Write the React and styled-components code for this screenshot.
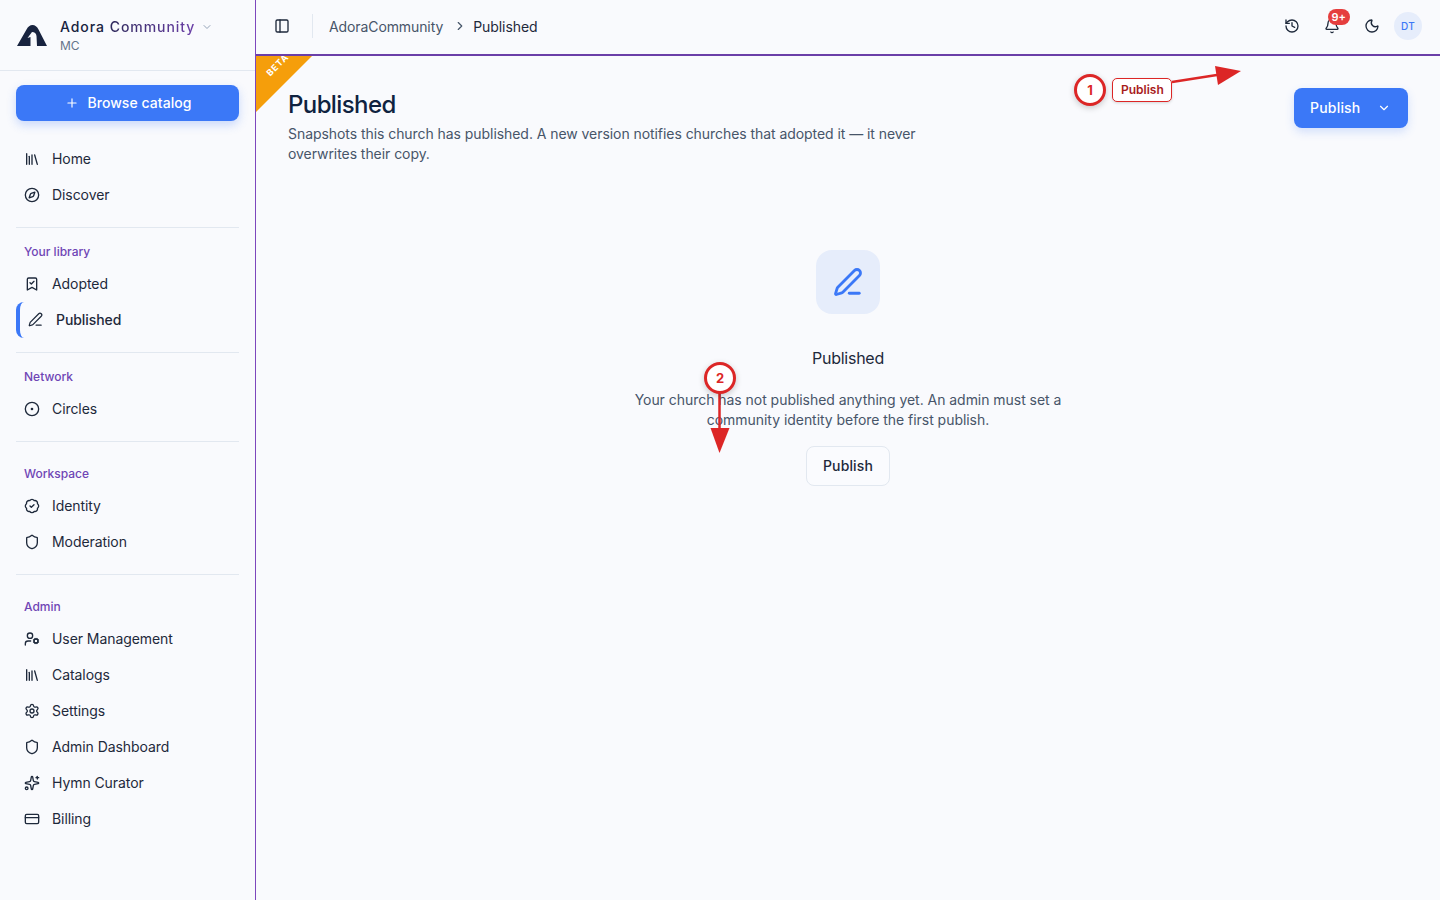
import React from 'react';
import styled, { createGlobalStyle } from 'styled-components';
import {
  BadgeCheck,
  Bell,
  BookmarkCheck,
  ChevronDown,
  ChevronRight,
  CircleDot,
  Compass,
  CreditCard,
  History,
  Library,
  Moon,
  PanelLeft,
  PenLine,
  Plus,
  Settings,
  Shield,
  Sparkles,
  UserCog,
} from 'lucide-react';

const sections = [
  { items: [{ icon: Library, label: 'Home' }, { icon: Compass, label: 'Discover' }] },
  {
    title: 'Your library',
    items: [{ icon: BookmarkCheck, label: 'Adopted' }, { icon: PenLine, label: 'Published', active: true }],
  },
  { title: 'Network', items: [{ icon: CircleDot, label: 'Circles' }] },
  {
    title: 'Workspace',
    roomy: true,
    items: [{ icon: BadgeCheck, label: 'Identity' }, { icon: Shield, label: 'Moderation' }],
  },
  {
    title: 'Admin',
    roomy: true,
    items: [
      { icon: UserCog, label: 'User Management' },
      { icon: Library, label: 'Catalogs' },
      { icon: Settings, label: 'Settings' },
      { icon: Shield, label: 'Admin Dashboard' },
      { icon: Sparkles, label: 'Hymn Curator' },
      { icon: CreditCard, label: 'Billing' },
    ],
  },
];

export default function App() {
  return (
    <>
      <GlobalStyle />
      <Shell>
        <Sidebar>
          <Brand>
            <svg width="32" height="24" viewBox="0 0 32 24">
              <path
                fill="#18233f"
                d="M1 23 L10.500 6.500 C12 3.500 14 2 16.500 2 C19 2 21 3.500 22.500 6.500 L31 23 L21 23 L20.500 13 C20.300 10.500 18.500 9 16 9 L11.500 15 L14.500 14 L14.500 23 Z"
              />
            </svg>
            <BrandText>
              <BrandRow>
                <BrandName>
                  Adora <span>Community</span>
                </BrandName>
                <ChevronDown size={12} color="#94a3b8" />
              </BrandRow>
              <BrandSub>MC</BrandSub>
            </BrandText>
          </Brand>
          <SidebarBody>
            <BrowseButton>
              <Plus size={14} strokeWidth={2} />
              Browse catalog
            </BrowseButton>
            {sections.map((section, i) => (
              <NavSection key={i} $roomy={section.roomy}>
                {section.title && <SectionTitle>{section.title}</SectionTitle>}
                {section.items.map((item) => (
                  <NavItem key={item.label} $active={item.active}>
                    <item.icon size={item.active ? 15 : 16} strokeWidth={2} />
                    {item.label}
                  </NavItem>
                ))}
              </NavSection>
            ))}
          </SidebarBody>
        </Sidebar>
        <Main>
          <TopBar>
            <IconButton>
              <PanelLeft size={16} />
            </IconButton>
            <BarDivider />
            <Crumb>AdoraCommunity</Crumb>
            <ChevronRight size={14} color="#475569" />
            <Crumb $current>Published</Crumb>
            <TopActions>
              <IconButton>
                <History size={16} />
              </IconButton>
              <IconButton>
                <Bell size={16} />
                <CountBadge>9+</CountBadge>
              </IconButton>
              <IconButton>
                <Moon size={16} />
              </IconButton>
              <Avatar>DT</Avatar>
            </TopActions>
          </TopBar>
          <Content>
            <BetaRibbon>
              <span>BETA</span>
            </BetaRibbon>
            <PageHead>
              <div>
                <PageTitle>Published</PageTitle>
                <PageText>
                  Snapshots this church has published. A new version notifies churches that adopted it — it never
                  overwrites their copy.
                </PageText>
              </div>
              <PublishMenu>
                Publish
                <ChevronDown size={14} strokeWidth={2} />
              </PublishMenu>
            </PageHead>
            <EmptyState>
              <EmptyIcon>
                <PenLine size={30} strokeWidth={2.25} />
              </EmptyIcon>
              <EmptyTitle>Published</EmptyTitle>
              <EmptyText>
                Your church has not published anything yet. An admin must set a community identity before the first
                publish.
              </EmptyText>
              <GhostButton>Publish</GhostButton>
            </EmptyState>
          </Content>
        </Main>
        <Marker $x={1074} $y={74}>1</Marker>
        <MarkerLabel>Publish</MarkerLabel>
        <ArrowLayer width="1440" height="900" viewBox="0 0 1440 900">
          <path d="M1172 82 L1220 74.5" stroke="#dc2626" strokeWidth="2.5" fill="none" />
          <path d="M1241 71 L1218 85 L1215 66 Z" fill="#dc2626" />
          <path d="M719.500 393 L719.500 432" stroke="#dc2626" strokeWidth="2.5" fill="none" />
          <path d="M719.500 453 L710.500 428 L729.500 428 Z" fill="#dc2626" />
        </ArrowLayer>
        <Marker $x={704} $y={362}>2</Marker>
      </Shell>
    </>
  );
}

const GlobalStyle = createGlobalStyle`
  html, body {
    margin: 0;
    background: #f9fafd;
    font-family: Inter, "Liberation Sans", sans-serif;
    color: #1e293b;
  }
  * {
    box-sizing: border-box;
  }
`;

const Shell = styled.div`
  position: relative;
  display: flex;
  height: 900px;
  overflow: hidden;
  background: #f9fafd;
`;

const Sidebar = styled.aside`
  width: 256px;
  flex: none;
  border-right: 1px solid #7d47bd;
`;

const Brand = styled.div`
  height: 71px;
  padding: 0 16px;
  display: flex;
  align-items: center;
  gap: 12px;
  border-bottom: 1px solid #e2e8f0;
`;

const BrandText = styled.div`
  display: flex;
  flex-direction: column;
  gap: 1px;
`;

const BrandRow = styled.div`
  display: flex;
  align-items: center;
  gap: 6px;
`;

const BrandName = styled.div`
  font-size: 14px;
  line-height: 20px;
  font-weight: 500;
  letter-spacing: 0.95px;
  color: #18233f;

  span {
    background: linear-gradient(90deg, #2f2a5c, #6b3fa8);
    -webkit-background-clip: text;
    background-clip: text;
    color: transparent;
  }
`;

const BrandSub = styled.div`
  font-size: 12px;
  line-height: 16px;
  color: #64748b;
`;

const SidebarBody = styled.div`
  padding: 14px 16px 0;
`;

const BrowseButton = styled.button`
  width: 100%;
  height: 36px;
  padding: 0 0 1px 1px;
  display: flex;
  align-items: center;
  justify-content: center;
  gap: 9px;
  border: 0;
  border-radius: 8px;
  background: #3b78f7;
  color: #fff;
  font: 500 14px Inter, sans-serif;
  letter-spacing: 0.05px;
  box-shadow: 0 4px 10px rgba(59, 120, 247, 0.25);

  svg {
    margin-top: 1px;
  }
`;

const NavSection = styled.nav`
  display: flex;
  flex-direction: column;
  padding: ${(p) => (p.$roomy ? '24px' : '16px')} 0 14px;
  border-bottom: 1px solid #e2e8f0;

  &:first-of-type {
    padding-top: 20px;
  }

  &:last-child {
    border-bottom: 0;
  }
`;

const SectionTitle = styled.div`
  height: 16px;
  margin-bottom: 6px;
  padding-left: 8px;
  font-size: 12px;
  line-height: 15px;
  font-weight: 500;
  color: #6f45b5;
`;

const NavItem = styled.a`
  height: 36px;
  padding: 0 0 1px 8px;
  display: flex;
  align-items: center;
  gap: ${(p) => (p.$active ? '13px' : '12px')};
  font-size: 14px;
  font-weight: ${(p) => (p.$active ? 500 : 400)};
  letter-spacing: -0.07px;
  color: #1e293b;
  border-left: ${(p) => (p.$active ? '4px solid #3b78f7' : '0')};
  border-radius: ${(p) => (p.$active ? '8px' : '0')};

  svg {
    flex: none;
  }
`;

const Main = styled.main`
  flex: 1;
  min-width: 0;
  display: flex;
  flex-direction: column;
`;

const TopBar = styled.header`
  height: 56px;
  flex: none;
  display: flex;
  align-items: center;
  padding: 0 18px 2px 10px;
  border-bottom: 2px solid #6b3fa8;
`;

const IconButton = styled.div`
  position: relative;
  width: 32px;
  height: 32px;
  display: flex;
  align-items: center;
  justify-content: center;
  color: #1e293b;
`;

const BarDivider = styled.div`
  width: 1px;
  height: 24px;
  margin: 0 16px 0 14px;
  background: #e2e8f0;
`;

const Crumb = styled.span`
  font-size: 14px;
  letter-spacing: ${(p) => (p.$current ? '-0.07px' : '-0.1px')};
  color: ${(p) => (p.$current ? '#1e293b' : '#475569')};
  margin-right: ${(p) => (p.$current ? '0' : '10px')};
  margin-left: ${(p) => (p.$current ? '6px' : '0')};
`;

const TopActions = styled.div`
  margin-left: auto;
  display: flex;
  align-items: center;
  gap: 8px;
`;

const CountBadge = styled.span`
  position: absolute;
  top: -1px;
  right: -2px;
  min-width: 22px;
  height: 16px;
  padding: 0 4px;
  border-radius: 8px;
  background: #e53e3e;
  color: #fff;
  font-size: 11px;
  line-height: 16px;
  font-weight: 600;
  text-align: center;
`;

const Avatar = styled.div`
  width: 28px;
  height: 28px;
  margin-left: -2px;
  border-radius: 50%;
  background: #e6edfb;
  color: #3b78f7;
  font-size: 10px;
  font-weight: 500;
  letter-spacing: 0.4px;
  display: flex;
  align-items: center;
  justify-content: center;
`;

const Content = styled.section`
  position: relative;
  flex: 1;
  padding: 32px;
`;

const BetaRibbon = styled.div`
  position: absolute;
  top: 0;
  left: 0;
  width: 56px;
  height: 56px;
  overflow: hidden;
  background: #f59e0b;
  clip-path: polygon(0 0, 100% 0, 0 100%);

  span {
    position: absolute;
    top: 3px;
    left: 8px;
    font-size: 9px;
    line-height: 12px;
    font-weight: 700;
    letter-spacing: 1px;
    color: #fff;
    transform: rotate(-45deg);
  }
`;

const PageHead = styled.div`
  display: flex;
  align-items: flex-start;
  justify-content: space-between;
`;

const PageTitle = styled.h1`
  margin: 0 0 2px;
  font-size: 24px;
  line-height: 34px;
  font-weight: 500;
  letter-spacing: -0.6px;
  color: #0f2240;
`;

const PageText = styled.p`
  margin: 0;
  width: 640px;
  font-size: 14px;
  line-height: 20px;
  letter-spacing: -0.06px;
  color: #475569;
`;

const PublishMenu = styled.button`
  width: 114px;
  height: 40px;
  padding: 0 17px 1px 16px;
  display: flex;
  align-items: center;
  justify-content: space-between;
  border: 0;
  border-radius: 8px;
  background: #3b78f7;
  color: #fff;
  font: 500 14px Inter, sans-serif;
  letter-spacing: 0.2px;
  box-shadow: 0 4px 10px rgba(59, 120, 247, 0.2);
`;

const EmptyState = styled.div`
  margin-top: 86px;
  display: flex;
  flex-direction: column;
  align-items: center;
  text-align: center;
`;

const EmptyIcon = styled.div`
  width: 64px;
  height: 64px;
  border-radius: 16px;
  background: #e6edfb;
  color: #3b78f7;
  display: flex;
  align-items: center;
  justify-content: center;
`;

const EmptyTitle = styled.h2`
  margin: 32px 0 0;
  font-size: 16px;
  line-height: 24px;
  font-weight: 400;
  letter-spacing: -0.25px;
  color: #1e293b;
`;

const EmptyText = styled.p`
  margin: 20px 0 0;
  width: 448px;
  font-size: 14px;
  line-height: 20px;
  letter-spacing: -0.04px;
  color: #475569;
`;

const GhostButton = styled.button`
  margin-top: 16px;
  width: 84px;
  height: 40px;
  padding: 0 0 1px;
  border: 1px solid #e2e8f0;
  border-radius: 8px;
  background: #fafbfe;
  color: #1e293b;
  font: 500 14px Inter, sans-serif;
  letter-spacing: 0.15px;
`;

const Marker = styled.div`
  position: absolute;
  left: ${(p) => p.$x}px;
  top: ${(p) => p.$y}px;
  width: 32px;
  height: 32px;
  border: 3px solid #dc2626;
  border-radius: 50%;
  background: #fff;
  color: #dc2626;
  font-size: 13px;
  font-weight: 700;
  display: flex;
  align-items: center;
  justify-content: center;
  box-shadow: 0 2px 6px rgba(0, 0, 0, 0.2);
`;

const MarkerLabel = styled.div`
  position: absolute;
  left: 1112px;
  top: 78px;
  height: 24px;
  padding: 0 7px 0 8px;
  border: 1px solid #dc2626;
  border-radius: 5px;
  background: #fff;
  color: #a81c1c;
  font-size: 12px;
  line-height: 22px;
  font-weight: 600;
  box-shadow: 0 1px 3px rgba(0, 0, 0, 0.15);
`;

const ArrowLayer = styled.svg`
  position: absolute;
  left: 0;
  top: 0;
  pointer-events: none;
`;
